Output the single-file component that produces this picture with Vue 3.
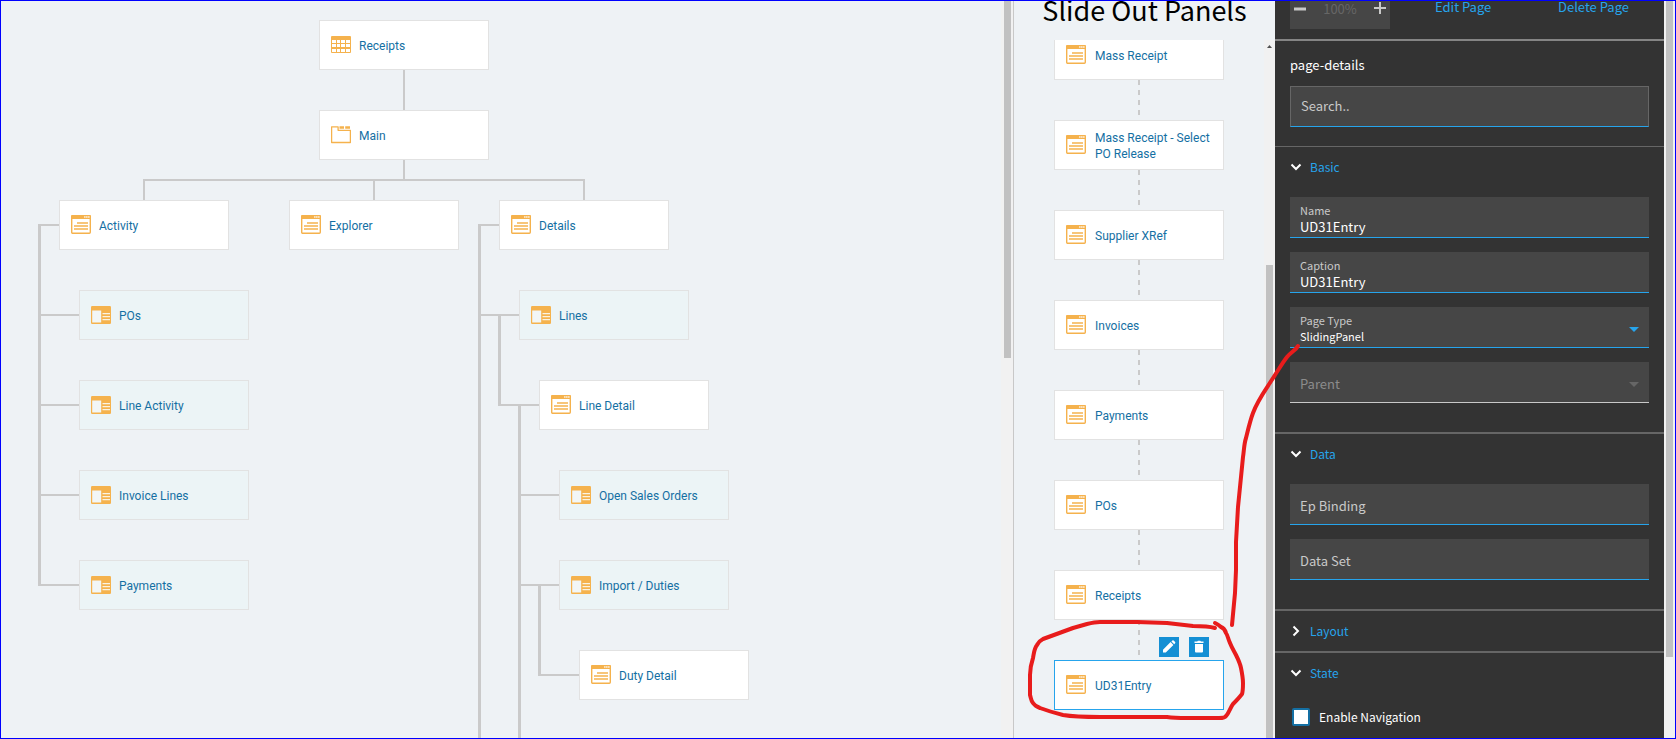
<script setup>
import { ref } from 'vue'

const nodes = [
  { label: 'Receipts', icon: 'grid', x: 318, y: 19 },
  { label: 'Main', icon: 'tabs', x: 318, y: 109 },
  { label: 'Activity', icon: 'page', x: 58, y: 199 },
  { label: 'Explorer', icon: 'page', x: 288, y: 199 },
  { label: 'Details', icon: 'page', x: 498, y: 199 },
  { label: 'POs', icon: 'panel', x: 78, y: 289 },
  { label: 'Line Activity', icon: 'panel', x: 78, y: 379 },
  { label: 'Invoice Lines', icon: 'panel', x: 78, y: 469 },
  { label: 'Payments', icon: 'panel', x: 78, y: 559 },
  { label: 'Lines', icon: 'panel', x: 518, y: 289 },
  { label: 'Line Detail', icon: 'page', x: 538, y: 379 },
  { label: 'Open Sales Orders', icon: 'panel', x: 558, y: 469 },
  { label: 'Import / Duties', icon: 'panel', x: 558, y: 559 },
  { label: 'Duty Detail', icon: 'page', x: 578, y: 649 },
]

const slideOuts = [
  'Mass Receipt',
  'Mass Receipt - Select PO Release',
  'Supplier XRef',
  'Invoices',
  'Payments',
  'POs',
  'Receipts',
  'UD31Entry',
]

const selected = ref('UD31Entry')
const name = ref('UD31Entry')
const caption = ref('UD31Entry')
const pageType = ref('SlidingPanel')
const epBinding = ref('')
const dataSet = ref('')
const search = ref('')
const enableNavigation = ref(false)
</script>

<template>
  <div class="shell">
    <svg width="0" height="0" class="defs" aria-hidden="true">
      <symbol id="ico-grid" viewBox="0 0 20 20">
        <rect x="0" y="1" width="20" height="17" rx="1" fill="#f5b24d" />
        <g fill="#fff">
          <rect x="1" y="5" width="4" height="3" /><rect x="6" y="5" width="3" height="3" /><rect x="10" y="5" width="4" height="3" /><rect x="15" y="5" width="4" height="3" />
          <rect x="1" y="9" width="4" height="3" /><rect x="6" y="9" width="3" height="3" /><rect x="10" y="9" width="4" height="3" /><rect x="15" y="9" width="4" height="3" />
          <rect x="1" y="14" width="4" height="3" /><rect x="6" y="14" width="3" height="3" /><rect x="10" y="14" width="4" height="3" /><rect x="15" y="14" width="4" height="3" />
        </g>
      </symbol>
      <symbol id="ico-tabs" viewBox="0 0 20 20">
        <path d="M.6 17.5V1.8h6.5v3.5h12.3v12.2z" fill="none" stroke="#f5b24d" stroke-width="1.3" stroke-linejoin="round" />
        <path d="M8.5 1.2h4.5v2.6H8.500zM14.200 1.200h4.800v2.600h-4.800z" fill="#f5b24d" />
      </symbol>
      <symbol id="ico-page" viewBox="0 0 20 20">
        <rect x=".7" y=".7" width="18.600" height="17.600" rx="1" fill="#fff" stroke="#f5b24d" stroke-width="1.400" />
        <path d="M0 1.200Q0 0 1.200 0h17.600Q20 0 20 1.200V4H0z" fill="#f5b24d" />
        <path d="M13.200 1.200h1.300v1.600h-1.300zM15.200 1.200h1.300v1.600h-1.300zM17.200 1.200h1.300v1.600h-1.300z" fill="#fff" />
        <path d="M6 8h11M3 11h14M3 14h14" stroke="#f5b24d" stroke-width="1.400" />
      </symbol>
      <symbol id="ico-panel" viewBox="0 0 20 20">
        <rect x="0" y="1" width="20" height="18" rx="1.200" fill="#f5b24d" />
        <rect x="1.200" y="5.500" width="9" height="12" fill="#f2f6f5" />
        <path d="M11.500 8.700H19M11.500 11.600H19M11.500 14.600H19" stroke="#fbf3e2" stroke-width="1.300" />
      </symbol>
    </svg>

    <main class="map">
      <div class="canvas">
        <svg class="wires" width="1000" height="1200" fill="none" stroke="#cacaca" stroke-width="2" aria-hidden="true">
          <path d="M403 69v40M403 159v20M143 199v-20h440v20M373 179v20" />
          <path d="M58 224H38M39 314h39M39 404h39M39 494h39M37 584h41" />
          <path d="M498 224h-20M479 314h39M497 404h41M519 494h39M519 584h39M537 674h41" />
          <path d="M38.500 223v361M478.500 223v977M498.500 315v89M518.500 405v795M538.500 585v89" stroke-width="3" />
        </svg>
        <button
          v-for="n in nodes"
          :key="n.label + n.y"
          type="button"
          class="node placed"
          :class="{ tinted: n.icon === 'panel' }"
          :style="{ left: n.x + 'px', top: n.y + 'px' }"
        >
          <svg class="node-icon" aria-hidden="true"><use :href="'#ico-' + n.icon" /></svg>
          <span>{{ n.label }}</span>
        </button>
      </div>
      <div class="track map-track"><div class="thumb map-thumb"></div></div>
    </main>

    <section class="slides">
      <h1>Slide Out Panels</h1>
      <div class="slides-body">
        <ul>
          <li v-for="s in slideOuts" :key="s">
            <div v-if="s === selected" class="actions">
              <button type="button" aria-label="Edit">
                <svg width="20" height="20" viewBox="0 0 20 20" fill="#fff" aria-hidden="true"><path d="M4 15.500v-2.800l7.600-7.600 2.800 2.800-7.600 7.600zM12.400 4.400l1-.9q.6-.5 1.200 0l1.500 1.500q.5.600 0 1.200l-.9 1z" /></svg>
              </button>
              <button type="button" aria-label="Delete">
                <svg width="20" height="20" viewBox="0 0 20 20" fill="#fff" aria-hidden="true"><path d="M5.500 4.500h2.700l.7-.8h2.400l.7.800h2.500V6h-9zM6 7h8v7.500q0 1-1 1H7q-1 0-1-1z" /></svg>
              </button>
            </div>
            <button type="button" class="node" :class="{ selected: s === selected }" @click="selected = s">
              <svg class="node-icon" aria-hidden="true"><use href="#ico-page" /></svg>
              <span>{{ s }}</span>
            </button>
          </li>
        </ul>
        <div class="track slides-track">
          <svg class="up" width="11" height="13" aria-hidden="true"><path d="M3 8l2.500-3L8 8z" fill="#505050" /></svg>
          <div class="thumb slides-thumb"></div>
        </div>
      </div>
    </section>

    <aside class="side">
      <div class="props">
        <div class="toolbar">
          <div class="zoom">
            <button type="button" aria-label="Zoom out"><svg width="12" height="12" aria-hidden="true"><path d="M0 7h12" stroke="#c9c9c9" stroke-width="3" /></svg></button>
            <span>100%</span>
            <button type="button" aria-label="Zoom in"><svg width="12" height="14" aria-hidden="true"><path d="M0 7h12M6 1v12" stroke="#c9c9c9" stroke-width="2" /></svg></button>
          </div>
          <a href="#edit">Edit Page</a>
          <a href="#delete">Delete Page</a>
        </div>

        <div class="lookup">
          <label for="search">page-details</label>
          <input id="search" v-model="search" type="text" placeholder="Search.." />
        </div>

        <section class="group first">
          <button type="button" class="group-head"><svg width="12" height="12" aria-hidden="true"><path d="M1.500 3.500L6 8l4.500-4.500" /></svg>Basic</button>
          <div class="fields">
            <div class="field filled"><label for="f-name">Name</label><input id="f-name" v-model="name" type="text" /></div>
            <div class="field filled"><label for="f-caption">Caption</label><input id="f-caption" v-model="caption" type="text" /></div>
            <div class="field filled">
              <label for="f-type">Page Type</label>
              <select id="f-type" v-model="pageType"><option>SlidingPanel</option><option>Page</option></select>
              <svg class="caret" width="10" height="5" aria-hidden="true"><path d="M0 0h10L5 5z" fill="#26a4ec" /></svg>
            </div>
            <div class="field disabled">
              <label for="f-parent">Parent</label>
              <select id="f-parent" disabled><option></option></select>
              <svg class="caret" width="10" height="5" aria-hidden="true"><path d="M0 0h10L5 5z" fill="#666" /></svg>
            </div>
          </div>
        </section>

        <section class="group">
          <button type="button" class="group-head"><svg width="12" height="12" aria-hidden="true"><path d="M1.500 3.500L6 8l4.500-4.500" /></svg>Data</button>
          <div class="fields">
            <div class="field"><label for="f-ep">Ep Binding</label><input id="f-ep" v-model="epBinding" type="text" /></div>
            <div class="field"><label for="f-set">Data Set</label><input id="f-set" v-model="dataSet" type="text" /></div>
          </div>
        </section>

        <section class="group">
          <button type="button" class="group-head"><svg width="12" height="12" aria-hidden="true"><path d="M3.500 1.500L8 6l-4.500 4.500" /></svg>Layout</button>
        </section>

        <section class="group">
          <button type="button" class="group-head"><svg width="12" height="12" aria-hidden="true"><path d="M1.500 3.500L6 8l4.500-4.500" /></svg>State</button>
          <label class="check"><input v-model="enableNavigation" type="checkbox" />Enable Navigation</label>
        </section>
      </div>
      <div class="track side-track"><div class="thumb side-thumb"></div></div>
    </aside>

    <svg class="ink" width="280" height="400" viewBox="1024 336 280 400" aria-hidden="true">
      <path d="M1298 346C1296 350 1291 352 1287 357C1283 362 1279 369 1275 375C1267 388 1258 399 1253 413C1250 421 1248 430 1246 438C1244 444 1244 451 1243 457L1241 477L1238 507L1236 542L1236 570L1235 593L1232 625" />
      <path d="M1215 628C1208 626 1201 626 1193 626L1167 623L1137 622H1100C1095 622 1091 623 1087 624L1073 628L1043 639C1039 641 1038 643 1037 645C1034 649 1034 653 1033 658C1031 664 1030 669 1030 675V695C1031 698 1031 701 1033 703C1035 706 1037 707 1040 708C1048 711 1055 713 1063 715C1075 717 1088 717 1100 717H1167C1174 718 1181 718 1187 718H1219C1222 718 1225 718 1226 716C1229 713 1230 708 1233 704C1237 700 1239 698 1242 694C1243 691 1243 687 1243 683C1243 678 1242 673 1241 668C1240 663 1238 659 1236 655C1234 651 1232 648 1230 643C1228 639 1228 636 1226 633C1225 630 1224 628 1221 627C1219 625 1217 624 1215 623" />
    </svg>
  </div>
</template>

<style>
body {
  margin: 0;
}
</style>

<style scoped>
.shell {
  --source: "Noto Sans CJK SC", "Noto Sans", sans-serif;
  position: relative;
  display: grid;
  grid-template-columns: minmax(0, 1fr) 262px 400px;
  grid-template-rows: minmax(0, 1fr);
  box-sizing: border-box;
  height: 100vh;
  overflow: hidden;
  border: 1px solid #00f;
  background: #eef2f5;
}
.shell *,
.shell *::before {
  box-sizing: border-box;
}
.defs {
  position: absolute;
}
button {
  margin: 0;
  padding: 0;
  border: 0;
  background: none;
  font: inherit;
  color: inherit;
  cursor: pointer;
}
.track {
  background: #f1f1f1;
  flex: none;
}
.thumb {
  width: 7px;
  background: #c1c1c1;
}

.map {
  display: flex;
  overflow: hidden;
}
.canvas {
  position: relative;
  flex: 1;
  overflow: hidden;
}
.wires {
  position: absolute;
  left: 0;
  top: 0;
}
.map-track {
  width: 12px;
  padding-left: 3px;
}
.map-thumb {
  height: 357px;
}

.node {
  display: flex;
  align-items: center;
  gap: 9px;
  width: 170px;
  height: 50px;
  padding: 0 12px 0 11px;
  border: 1px solid #e2e2e2;
  background: #fff;
  color: #146fa3;
  font: 12px/16px Roboto, sans-serif;
  text-align: left;
}
.placed {
  position: absolute;
  gap: 8px;
}
.tinted {
  background: #ecf4f6;
}
.selected {
  border-color: #26a4ec;
}
.node-icon {
  flex: none;
  width: 20px;
  height: 20px;
}
.node span {
  padding-top: 2px;
}

.slides {
  display: flex;
  flex-direction: column;
  border-left: 1px solid #c8c8c8;
  overflow: hidden;
}
h1 {
  flex: none;
  height: 39px;
  margin: 0;
  font: 27px/18px var(--source);
  color: #000;
  text-align: center;
  white-space: nowrap;
}
.slides-body {
  display: flex;
  flex: 1;
  min-height: 0;
  overflow: hidden;
}
ul {
  flex: 1;
  margin: -10px 0 0;
  padding: 0 0 0 40px;
  list-style: none;
}
li {
  position: relative;
  width: 170px;
}
li + li::before {
  content: "";
  display: block;
  width: 2px;
  height: 40px;
  margin: 0 auto;
  background: repeating-linear-gradient(#cacaca 0 5px, transparent 5px 10px);
}
.actions {
  position: absolute;
  top: 17px;
  right: 15px;
  display: flex;
  gap: 10px;
}
.actions button {
  width: 20px;
  height: 20px;
  background: #148fd4;
}
.actions svg {
  display: block;
}
.slides-track {
  width: 11px;
  padding-left: 2px;
}
.up {
  display: block;
  margin-left: -2px;
}
.slides-thumb {
  height: 100%;
  margin-top: 212px;
}

.side {
  display: flex;
  overflow: hidden;
  font: 13px/20px var(--source);
  color: #fff;
}
.props {
  flex: 1;
  background: #333;
}
.side-track {
  width: 11px;
  padding-left: 2px;
}
.side-thumb {
  height: 656px;
}
.toolbar {
  display: flex;
  height: 40px;
  padding: 0 35px 0 15px;
  border-bottom: 2px solid #858585;
}
.toolbar a {
  margin-top: -4px;
  color: #26a4ec;
  text-decoration: none;
}
.toolbar a:first-of-type {
  margin-left: 45px;
}
.toolbar a:last-of-type {
  margin-left: auto;
}
.zoom {
  display: flex;
  justify-content: space-between;
  width: 100px;
  height: 28px;
  padding: 0 4px;
  background: #464646;
  color: #666;
  line-height: 16px;
}
.zoom button {
  height: 14px;
}
.zoom svg {
  display: block;
}
.lookup {
  padding: 14px 15px 19px;
}
.lookup label {
  display: block;
  margin-bottom: 11px;
}
.lookup input {
  display: block;
  width: 100%;
  height: 41px;
  padding: 0 10px 2px;
  border: 1px solid #666;
  border-bottom-color: #26a4ec;
  border-radius: 0;
  background: #464646;
  color: #fff;
  font: 13px/20px var(--source);
}
.lookup input::placeholder {
  color: #c9c9c9;
  opacity: 1;
}
.group {
  border-top: 2px solid #666;
}
.group.first {
  border-top-width: 1px;
}
.group-head {
  display: flex;
  align-items: center;
  gap: 8px;
  width: 100%;
  height: 40px;
  padding: 0 15px;
  color: #26a4ec;
  font-size: 12px;
}
.group-head path {
  fill: none;
  stroke: #fff;
  stroke-width: 2;
}
.fields {
  display: grid;
  gap: 14px;
  padding: 10px 15px 29px;
}
.field {
  position: relative;
}
.field label {
  position: absolute;
  left: 10px;
  top: 12px;
  color: #c9c9c9;
  pointer-events: none;
}
.field.filled label {
  top: 3px;
  font-size: 11px;
}
.field.disabled label {
  color: #8c8c8c;
}
.field input,
.field select {
  display: block;
  width: 100%;
  height: 41px;
  margin: 0;
  padding: 18px 10px 0;
  border: 0;
  border-bottom: 1px solid #26a4ec;
  border-radius: 0;
  appearance: none;
  background: #464646;
  color: #fff;
  font: 13px/20px var(--source);
}
.field select {
  font-size: 11px;
}
.field.disabled select {
  border-bottom-color: #c9c9c9;
  opacity: 1;
}
.caret {
  position: absolute;
  right: 10px;
  top: 20px;
  pointer-events: none;
}
.check {
  display: flex;
  align-items: center;
  gap: 9px;
  padding: 14px 17px;
  font-size: 12px;
}
.check input {
  width: 18px;
  height: 18px;
  margin: 0;
  border: 2px solid #146fa3;
  border-radius: 2px;
  appearance: none;
  background: #fff;
}
.check input:checked {
  background: #26a4ec;
}
.ink {
  position: absolute;
  right: 371px;
  top: 335px;
  fill: none;
  stroke: #e81c1c;
  stroke-width: 4;
  stroke-linecap: round;
  stroke-linejoin: round;
  pointer-events: none;
}
</style>
